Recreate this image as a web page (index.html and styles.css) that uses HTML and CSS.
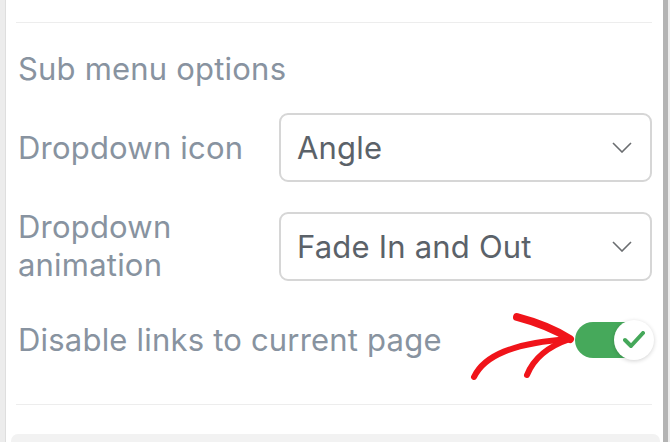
FILE: index.html
```html
<!DOCTYPE html>
<html lang="en">
<head>
  <meta charset="UTF-8" />
  <meta name="viewport" content="width=device-width, initial-scale=1" />
  <title>Sub menu options</title>
  <link rel="stylesheet" href="styles.css">
</head>
<body>
  <div class="frame">
    <div class="edge"></div>

    <main class="panel">
      <div class="section">
        <hr class="divider" />

        <h2 class="section-title">Sub menu options</h2>

        <div class="option-row">
          <label class="option-label">Dropdown icon</label>
          <div class="select-box">
            <span class="select-value">Angle</span>
            <svg class="chevron" width="20" height="11" viewBox="0 0 20 11">
              <path d="M1 1 L10 10 L19 1" fill="none" stroke="#6a6d70" stroke-width="1.6" />
            </svg>
          </div>
        </div>

        <div class="option-row">
          <label class="option-label">Dropdown<br>animation</label>
          <div class="select-box">
            <span class="select-value">Fade In and Out</span>
            <svg class="chevron" width="20" height="11" viewBox="0 0 20 11">
              <path d="M1 1 L10 10 L19 1" fill="none" stroke="#6a6d70" stroke-width="1.6" />
            </svg>
          </div>
        </div>

        <div class="option-row toggle-row">
          <label class="option-label">Disable links to current page</label>
          <div class="toggle">
            <div class="toggle-track"></div>
            <div class="toggle-knob">
              <svg width="22" height="18" viewBox="0 0 22 18">
                <path d="M2 9 L8 15 L20 2" fill="none" stroke="#45a85a" stroke-width="4" stroke-linecap="round" stroke-linejoin="round" />
              </svg>
            </div>
          </div>
        </div>

        <hr class="divider bottom-divider" />
      </div>

      <div class="next-card"></div>
    </main>

    <div class="scrollbar"></div>
  </div>

  <!-- hand drawn arrow pointing at the toggle -->
  <svg class="annotation" width="130" height="90" viewBox="0 0 130 90">
    <g fill="none" stroke="#f0141a" stroke-linecap="round" stroke-linejoin="round">
      <path d="M14 77 C 24 56, 52 43, 110 39" stroke-width="6" />
      <path d="M57 17 C 76 22, 96 30, 110 39" stroke-width="8" />
      <path d="M67 75 C 73 60, 86 47, 110 39" stroke-width="6" />
    </g>
  </svg>
</body>
</html>
```

FILE: styles.css
```css
body {
  margin: 0;
  font-family: Inter, "Liberation Sans", sans-serif;
  background-color: #fff;
  overflow: hidden;
}
.frame {
  display: flex;
  height: 100vh;
}
.edge {
  width: 5px;
  background-color: #ececec;
  border-right: 1px solid #dedede;
}
.panel {
  flex: 1;
  display: flex;
  flex-direction: column;
}
.section {
  padding: 22px 11px 0 10px;
  display: flex;
  flex-direction: column;
}
.divider {
  margin: 0;
  border: none;
  border-top: 1px solid #ededed;
}
.section-title {
  margin: 28px 0 26px 2px;
  font-size: 31px;
  line-height: 36px;
  letter-spacing: 0.2px;
  font-weight: 400;
  color: #8893a0;
}
.option-row {
  display: flex;
  align-items: center;
  margin-bottom: 26px;
}
.option-label {
  width: 261px;
  padding-left: 2px;
  flex-shrink: 0;
  font-size: 31px;
  line-height: 38px;
  letter-spacing: 0.2px;
  color: #8893a0;
}
.select-box {
  flex: 1;
  height: 69px;
  box-sizing: border-box;
  border: 2px solid #d6d6d6;
  border-radius: 9px;
  display: flex;
  align-items: center;
  justify-content: space-between;
  padding: 0 18px 0 16px;
}
.select-value {
  font-size: 31px;
  letter-spacing: 0.2px;
  color: #5b6269;
}
.toggle-row {
  margin-top: 10px;
  margin-bottom: 0;
  justify-content: space-between;
}
.toggle-row .option-label {
  width: auto;
}
.toggle {
  position: relative;
  width: 79px;
  height: 40px;
  margin-right: -2px;
  display: flex;
  align-items: center;
}
.toggle-track {
  width: 70px;
  height: 36px;
  border-radius: 18px;
  background-color: #46a95b;
}
.toggle-knob {
  position: absolute;
  right: 0;
  top: 0;
  width: 40px;
  height: 40px;
  border-radius: 50%;
  background: #fff;
  box-shadow: 0 1px 4px rgba(0,0,0,0.18);
  display: flex;
  align-items: center;
  justify-content: center;
}
.bottom-divider {
  margin-top: 44px;
}
.next-card {
  margin: 29px 3px 0 5px;
  flex: 1;
  background-color: #f2f2f2;
  border-radius: 7px 7px 0 0;
}
.scrollbar {
  width: 5px;
  background-color: #b4b4b4;
  border-right: 2px solid #ededed;
}
.annotation {
  position: absolute;
  left: 460px;
  top: 300px;
}
```
